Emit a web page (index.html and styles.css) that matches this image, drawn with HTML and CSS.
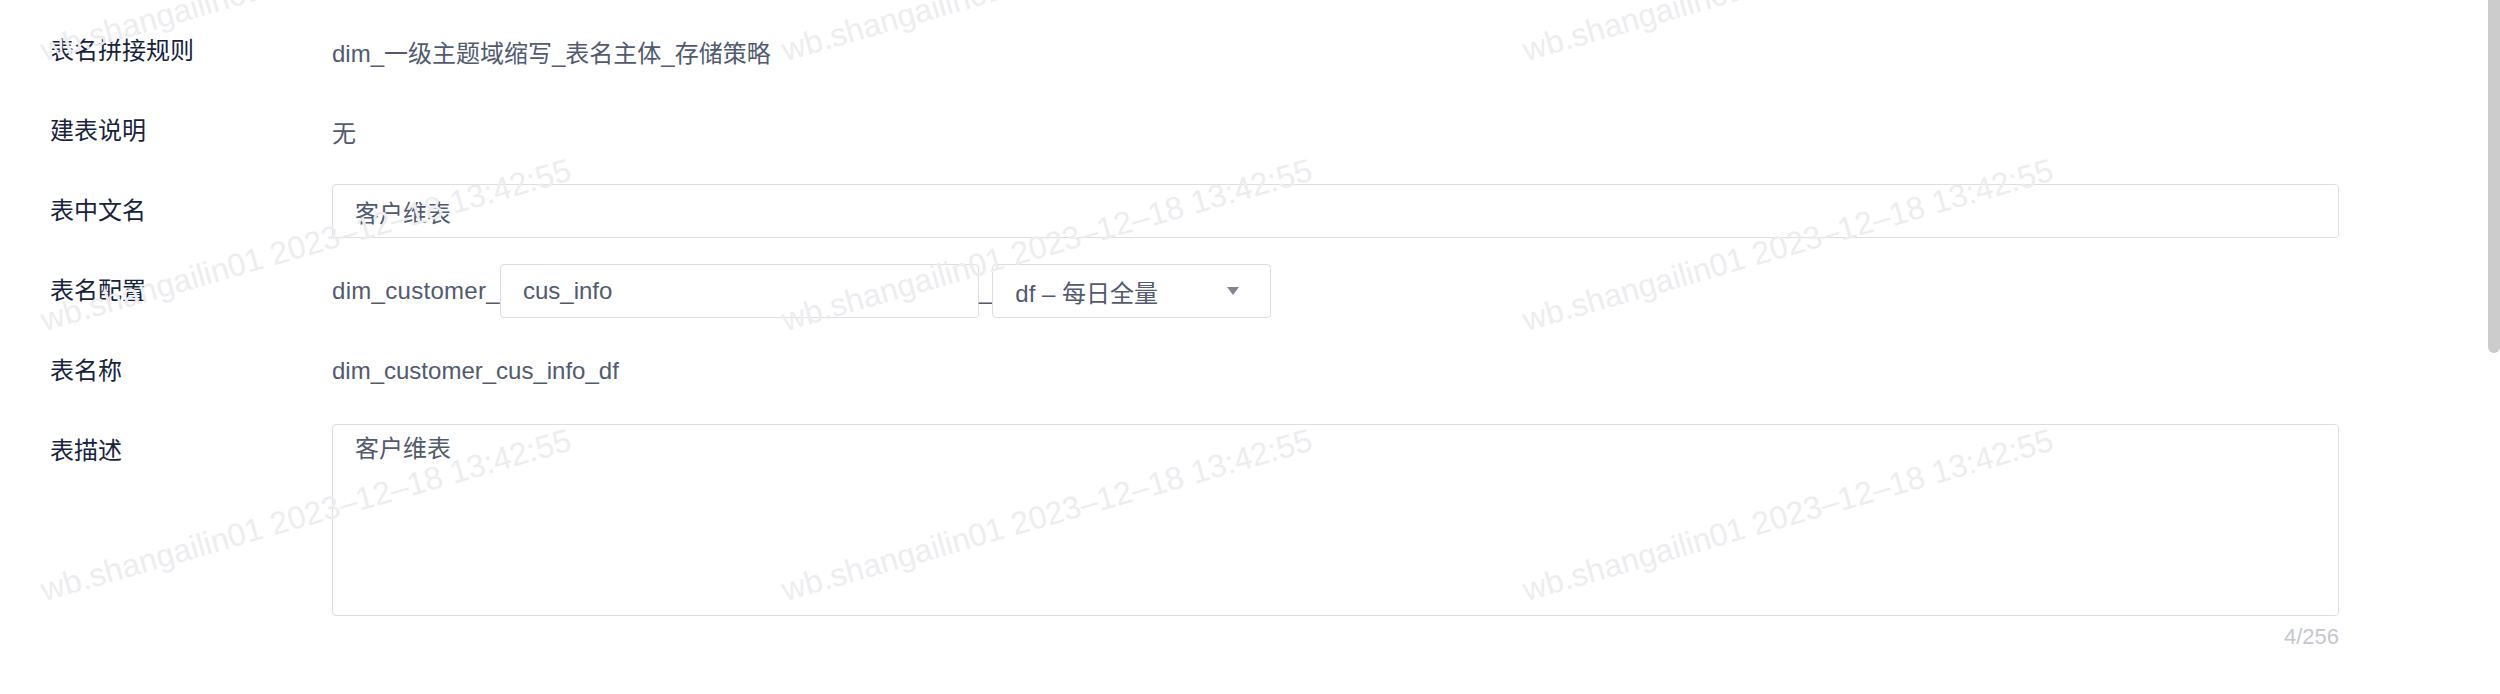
FILE: index.html
```html
<!DOCTYPE html>
<html lang="zh-CN">
<head>
	<meta charset="utf-8" />
	<title>新建维表</title>
	<link rel="stylesheet" href="styles.css">
</head>
<body>
	<div id="page">
		<form class="form">
			<div class="row">
				<label class="label">表名拼接规则</label>
				<div class="value">dim_一级主题域缩写_表名主体_存储策略</div>
			</div>
			<div class="row">
				<label class="label">建表说明</label>
				<div class="value">无</div>
			</div>
			<div class="row">
				<label class="label">表中文名</label>
				<div class="value">
					<input class="input" type="text" value="客户维表" />
				</div>
			</div>
			<div class="row">
				<label class="label">表名配置</label>
				<div class="value name-config">
					<span class="prefix">dim_customer_</span>
					<input class="input short" type="text" value="cus_info" />
					<span>_</span>
					<div class="select">
						<span>df – 每日全量</span>
						<svg class="arrow" width="12" height="8" viewBox="0 0 12 8"><path d="M0 0h12L6 8z" fill="#808695"/></svg>
					</div>
				</div>
			</div>
			<div class="row">
				<label class="label">表名称</label>
				<div class="value">dim_customer_cus_info_df</div>
			</div>
			<div class="row tall">
				<label class="label">表描述</label>
				<div class="value">
					<textarea class="textarea">客户维表</textarea>
					<div class="count">4/256</div>
				</div>
			</div>
		</form>

		<div class="watermark">
			<div class="mark"><span>wb.shangailin01 2023–12–18 13:42:55</span></div>
			<div class="mark"><span>wb.shangailin01 2023–12–18 13:42:55</span></div>
			<div class="mark"><span>wb.shangailin01 2023–12–18 13:42:55</span></div>
			<div class="mark"><span>wb.shangailin01 2023–12–18 13:42:55</span></div>
			<div class="mark"><span>wb.shangailin01 2023–12–18 13:42:55</span></div>
			<div class="mark"><span>wb.shangailin01 2023–12–18 13:42:55</span></div>
			<div class="mark"><span>wb.shangailin01 2023–12–18 13:42:55</span></div>
			<div class="mark"><span>wb.shangailin01 2023–12–18 13:42:55</span></div>
			<div class="mark"><span>wb.shangailin01 2023–12–18 13:42:55</span></div>
		</div>

		<div class="scroll-thumb"></div>
	</div>
</body>
</html>
```

FILE: styles.css
```css
html, body {
	height: 100%;
	margin: 0;
	overflow: hidden;
}
body {
	font-family: "Liberation Sans", Arial, "Noto Sans CJK SC", sans-serif;
	font-size: 24px;
	background: #fff;
	color: #17233d;
}
#page {
	position: relative;
	height: 100%;
}
.form {
	margin: 0;
	padding: 24px 161px 0 50px;
}
.row {
	display: flex;
	align-items: center;
	height: 54px;
	margin-bottom: 26px;
}
.row.tall {
	align-items: flex-start;
	height: auto;
}
.label {
	flex: none;
	width: 282px;
	line-height: 54px;
	color: #17233d;
}
.value {
	flex: 1;
	color: #515a6e;
}
.input,
.textarea,
.select {
	box-sizing: border-box;
	border: 1px solid #dcdee2;
	border-radius: 4px;
	background: #fff;
	font-family: inherit;
	font-size: 24px;
	color: #515a6e;
}
.input {
	display: block;
	width: 100%;
	height: 54px;
	padding: 0 22px;
	outline: none;
}
.name-config {
	display: flex;
	align-items: center;
}
.prefix {
	letter-spacing: 0.3px;
}
.input.short {
	width: 479px;
}
.select {
	display: flex;
	align-items: center;
	justify-content: space-between;
	width: 279px;
	height: 54px;
	padding: 0 31px 0 22px;
}
.arrow {
	display: block;
}
.textarea {
	display: block;
	width: 100%;
	height: 192px;
	margin: 0;
	padding: 6px 22px;
	line-height: 36px;
	resize: none;
	outline: none;
}
.count {
	margin-top: 6px;
	line-height: 30px;
	font-size: 22px;
	text-align: right;
	color: #c5c8ce;
}
.watermark {
	position: absolute;
	top: -204px;
	left: 46px;
	display: grid;
	grid-template-columns: repeat(3, 741px);
	grid-template-rows: repeat(3, 270px);
	pointer-events: none;
}
.mark {
	display: flex;
	align-items: flex-end;
}
.mark span {
	display: block;
	white-space: nowrap;
	font-size: 32px;
	line-height: 1;
	color: #ededf0;
	transform: rotate(-16deg);
	transform-origin: 0 100%;
}
.scroll-thumb {
	position: absolute;
	top: -10px;
	right: 0;
	width: 12px;
	height: 363px;
	border-radius: 6px;
	background: #ccc;
}
```
